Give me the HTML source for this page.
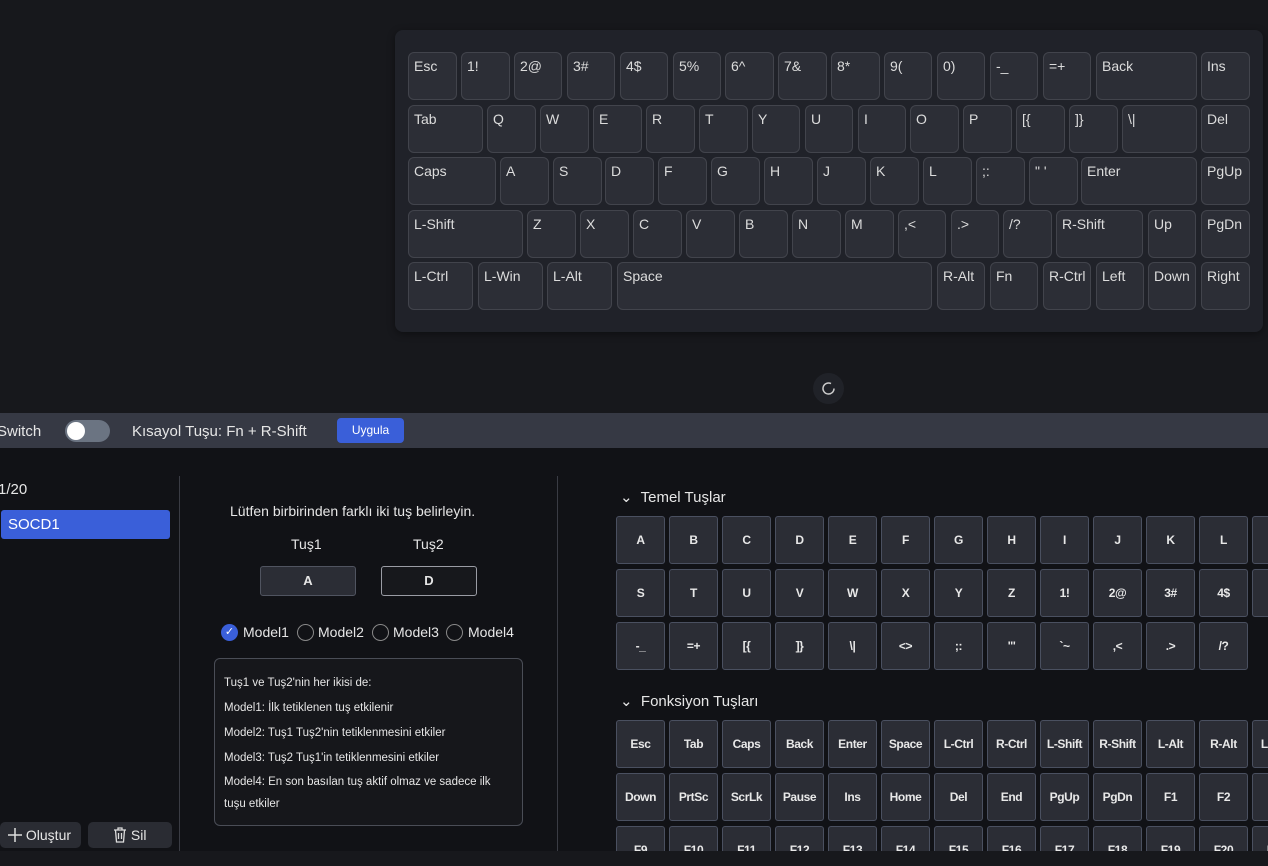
<!DOCTYPE html>
<html><head><meta charset="utf-8"><style>
*{box-sizing:border-box;margin:0;padding:0}
body{width:1268px;height:866px;overflow:hidden;background:#17181c;font-family:"Liberation Sans","DejaVu Sans",sans-serif;color:#e6e6e6;position:relative}
.kb{position:absolute;left:395px;top:30px;width:868px;height:302px;background:#202229;border-radius:8px;box-shadow:0 2px 8px rgba(0,0,0,.4)}
.k{position:absolute;height:48px;background:#2c2e36;border:1px solid #42444c;border-radius:6px;font-size:14px;color:#dcdcdc;padding:5px 0 0 5px;line-height:16px}
.spin{position:absolute;left:813px;top:373px;width:31px;height:31px;border-radius:50%;background:#202228}
.bar{position:absolute;left:0;top:413px;width:1268px;height:35px;background:#363944;font-size:15px}
.main{position:absolute;left:0;top:448px;width:1268px;height:403px;background:#111216}
.foot{position:absolute;left:0;top:851px;width:1268px;height:15px;background:#17181c}
.vl{position:absolute;top:476px;width:1px;height:375px;background:#3a3c44}
#grid{position:absolute;left:0;top:0;width:1268px;height:851px;overflow:hidden}
.g{position:absolute;width:49px;height:48px;background:#2b2d35;border:1.5px solid #4a5060;border-radius:3px;font-size:12px;font-weight:bold;color:#e8e8e8;display:flex;align-items:center;justify-content:center;letter-spacing:-0.4px}
.t{position:absolute;font-size:14px}
</style></head><body>
<div class="kb"></div>
<div id="keys"></div>
<div class="spin"><svg width="31" height="31"><path d="M21 15.5a5.5 5.5 0 1 1-3-4.9" fill="none" stroke="#ccc" stroke-width="1.5"/></svg></div>
<div class="bar">
<span style="position:absolute;left:-3px;top:10px">Switch</span>
<div style="position:absolute;left:65px;top:7px;width:45px;height:22px;border-radius:11px;background:#6b7482"><div style="position:absolute;left:2px;top:2px;width:18px;height:18px;border-radius:50%;background:#fff"></div></div>
<span style="position:absolute;left:132px;top:10px">Kısayol Tuşu: Fn + R-Shift</span>
<div style="position:absolute;left:337px;top:5px;width:67px;height:25px;border-radius:4px;background:#3a5fd9;font-size:12px;text-align:center;line-height:25px;color:#fff">Uygula</div>
</div>
<div class="main"></div>
<div class="foot"></div>
<div class="vl" style="left:179px"></div>
<div class="vl" style="left:557px"></div>
<div class="t" style="left:-2px;top:481px;font-size:15px">1/20</div>
<div style="position:absolute;left:1px;top:510px;width:169px;height:29px;background:#3a5fd9;border-radius:3px;font-size:15px;padding:6px 0 0 7px;color:#fff">SOCD1</div>
<div style="position:absolute;left:0;top:822px;width:81px;height:26px;background:#2a2c33;border-radius:5px;font-size:14px;padding:5px 0 0 8px"><svg width="14" height="14" style="vertical-align:-2px"><path d="M7 0v14M0 7h14" stroke="#ddd" stroke-width="1.5"/></svg> Oluştur</div>
<div style="position:absolute;left:88px;top:822px;width:84px;height:26px;background:#2a2c33;border-radius:5px;font-size:14px;padding:5px 0 0 25px"><svg width="14" height="16" style="vertical-align:-3px"><path d="M1 3h12M5 3V1h4v2M2.5 3l1 12h7l1-12M5.5 6v6M8.5 6v6" fill="none" stroke="#ddd" stroke-width="1.3"/></svg> Sil</div>
<div class="t" style="left:230px;top:503px;font-size:14px">Lütfen birbirinden farklı iki tuş belirleyin.</div>
<div class="t" style="left:291px;top:536px">Tuş1</div>
<div class="t" style="left:413px;top:536px">Tuş2</div>
<div style="position:absolute;left:260px;top:566px;width:96px;height:30px;background:#2b2d35;border:1px solid #505460;border-radius:3px;font-size:13px;font-weight:bold;text-align:center;line-height:28px">A</div>
<div style="position:absolute;left:381px;top:566px;width:96px;height:30px;background:#17181c;border:1.5px solid #9a9ca4;border-radius:3px;font-size:13px;font-weight:bold;text-align:center;line-height:27px">D</div>
<div style="position:absolute;left:221px;top:624px;width:17px;height:17px;border-radius:50%;background:#3a5fd9;color:#fff;font-size:11px;text-align:center;line-height:17px">✓</div>
<div class="t" style="left:243px;top:624px">Model1</div>
<div style="position:absolute;left:297px;top:624px;width:17px;height:17px;border-radius:50%;border:1px solid #888"></div>
<div class="t" style="left:318px;top:624px">Model2</div>
<div style="position:absolute;left:372px;top:624px;width:17px;height:17px;border-radius:50%;border:1px solid #888"></div>
<div class="t" style="left:393px;top:624px">Model3</div>
<div style="position:absolute;left:446px;top:624px;width:17px;height:17px;border-radius:50%;border:1px solid #888"></div>
<div class="t" style="left:468px;top:624px">Model4</div>
<div style="position:absolute;left:214px;top:658px;width:309px;height:168px;border:1px solid #4a4d56;border-radius:6px;background:#16171b;font-size:11.5px;padding:12px 9px 0 9px;line-height:25px">Tuş1 ve Tuş2'nin her ikisi de:<br>Model1: İlk tetiklenen tuş etkilenir<br>Model2: Tuş1 Tuş2'nin tetiklenmesini etkiler<br>Model3: Tuş2 Tuş1'in tetiklenmesini etkiler<br><span style="line-height:22px;display:inline-block">Model4: En son basılan tuş aktif olmaz ve sadece ilk tuşu etkiler</span></div>
<div class="t" style="left:620px;top:488px;font-size:15px">⌄&nbsp; Temel Tuşlar</div>
<div class="t" style="left:620px;top:692px;font-size:15px">⌄&nbsp; Fonksiyon Tuşları</div>
<div id="grid"></div>
<script>
var rows=[
[[408,457,"Esc"],[461,510,"1!"],[514,562,"2@"],[567,615,"3#"],[620,668,"4$"],[673,721,"5%"],[725,774,"6^"],[778,827,"7&"],[831,880,"8*"],[884,932,"9("],[937,985,"0)"],[990,1038,"-_"],[1043,1091,"=+"],[1096,1197,"Back"],[1201,1250,"Ins"]],
[[408,483,"Tab"],[487,536,"Q"],[540,589,"W"],[593,642,"E"],[646,695,"R"],[699,748,"T"],[752,800,"Y"],[805,853,"U"],[858,906,"I"],[910,959,"O"],[963,1012,"P"],[1016,1065,"[{"],[1069,1118,"]}"],[1122,1197,"\\|"],[1201,1250,"Del"]],
[[408,496,"Caps"],[500,549,"A"],[553,602,"S"],[605,654,"D"],[658,707,"F"],[711,760,"G"],[764,813,"H"],[817,866,"J"],[870,919,"K"],[923,972,"L"],[976,1025,";:"],[1029,1078,"\" '"],[1081,1197,"Enter"],[1201,1250,"PgUp"]],
[[408,523,"L-Shift"],[527,576,"Z"],[580,629,"X"],[633,682,"C"],[686,735,"V"],[739,788,"B"],[792,841,"N"],[845,894,"M"],[898,946,",<"],[951,999,".>"],[1003,1052,"/?"],[1056,1143,"R-Shift"],[1148,1196,"Up"],[1201,1250,"PgDn"]],
[[408,473,"L-Ctrl"],[478,543,"L-Win"],[547,612,"L-Alt"],[617,932,"Space"],[937,985,"R-Alt"],[990,1038,"Fn"],[1043,1091,"R-Ctrl"],[1096,1144,"Left"],[1148,1196,"Down"],[1201,1250,"Right"]]];
var ty=[52,105,157,210,262];
rows.forEach(function(r,i){r.forEach(function(k){var d=document.createElement('div');d.className='k';d.style.left=k[0]+'px';d.style.top=ty[i]+'px';d.style.width=(k[1]-k[0])+'px';d.textContent=k[2];document.getElementById('keys').appendChild(d);});});
var g=[[516,"A B C D E F G H I J K L M"],[569,"S T U V W X Y Z 1! 2@ 3# 4$ 5%"],[622,"-_ =+ [{ ]} \\| <> ;: \"' `~ ,< .> /?"],[720,"Esc Tab Caps Back Enter Space L-Ctrl R-Ctrl L-Shift R-Shift L-Alt R-Alt L-Win"],[773,"Down PrtSc ScrLk Pause Ins Home Del End PgUp PgDn F1 F2 F3"],[826,"F9 F10 F11 F12 F13 F14 F15 F16 F17 F18 F19 F20 F21"]];
g.forEach(function(r){r[1].split(" ").forEach(function(t,j){var d=document.createElement('div');d.className='g';d.style.left=(616+j*53)+'px';d.style.top=r[0]+'px';d.textContent=t;document.getElementById('grid').appendChild(d);});});
</script>
</body></html>
